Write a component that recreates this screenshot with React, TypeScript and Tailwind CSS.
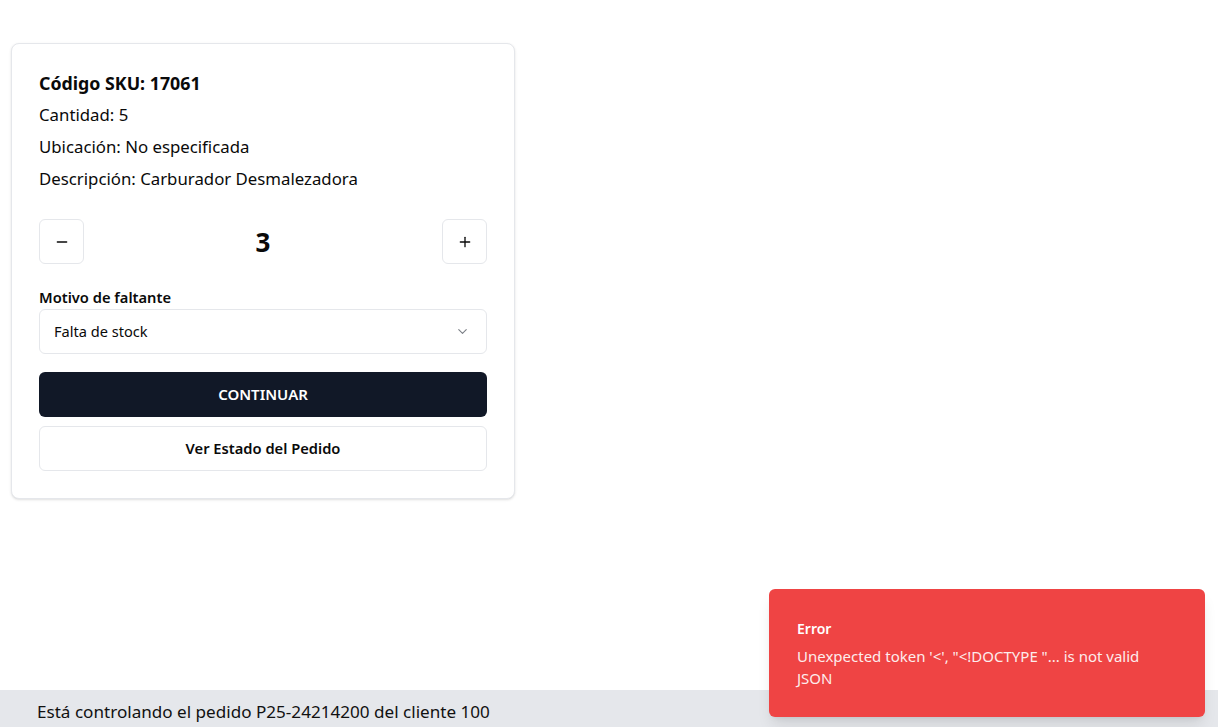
import React from "react";

export default function App() {
  return (
    <div
      className="relative h-[727px] w-full overflow-hidden bg-white flex flex-col text-[#0a0a0a]"
      style={{ fontFamily: '"Noto Sans", "Open Sans", sans-serif' }}
    >
      <div className="flex-1 pt-[43px] pl-[11px]">
        <div className="w-[504px] rounded-lg border border-[#e5e7eb] bg-white px-[27px] pt-[27px] pb-[27px] shadow-sm">
          <div className="flex flex-col gap-2 text-[16.8px] leading-6">
            <div className="text-[17.8px] font-bold">Código SKU: 17061</div>
            <div>Cantidad: 5</div>
            <div>Ubicación: No especificada</div>
            <div>Descripción: Carburador Desmalezadora</div>
          </div>
          <div className="mt-[28px] flex items-center justify-between">
            <button className="flex h-[45px] w-[45px] items-center justify-center rounded-md border border-[#e5e7eb] bg-white">
              <svg width="16" height="16" viewBox="0 0 24 24" fill="none" stroke="currentColor" strokeWidth="2" strokeLinecap="round">
                <path d="M5 12h14" />
              </svg>
            </button>
            <div className="text-[26px] font-bold leading-8">3</div>
            <button className="flex h-[45px] w-[45px] items-center justify-center rounded-md border border-[#e5e7eb] bg-white">
              <svg width="16" height="16" viewBox="0 0 24 24" fill="none" stroke="currentColor" strokeWidth="2" strokeLinecap="round">
                <path d="M5 12h14" />
                <path d="M12 5v14" />
              </svg>
            </button>
          </div>
          <div className="mt-[23px] text-[14.7px] font-semibold leading-5">Motivo de faltante</div>
          <div className="mt-[2px] flex h-[45px] items-center justify-between rounded-md border border-[#e5e7eb] bg-white pl-[14px] pr-[16px] text-[14.6px]">
            <span>Falta de stock</span>
            <svg width="15" height="15" viewBox="0 0 24 24" fill="none" stroke="#7b7f86" strokeWidth="1.8" strokeLinecap="round" strokeLinejoin="round">
              <path d="m6 9 6 6 6-6" />
            </svg>
          </div>
          <button className="mt-[18px] flex h-[45px] w-full items-center justify-center rounded-md bg-[#111827] text-[15px] font-semibold text-white">
            CONTINUAR
          </button>
          <button className="mt-[9px] flex h-[45px] w-full items-center justify-center rounded-md border border-[#e5e7eb] bg-white text-[14.7px] font-semibold">
            Ver Estado del Pedido
          </button>
        </div>
      </div>
      <div className="h-[37px] bg-[#e5e7eb] pl-[37px] pt-[10px] text-[17.1px] leading-6 text-[#111]">
        Está controlando el pedido P25-24214200 del cliente 100
      </div>
      <div className="absolute right-[13px] bottom-[10px] w-[436px] rounded-md bg-[#ef4444] px-[28px] pt-[32px] pb-[28px] text-white shadow-lg">
        <div className="text-sm font-semibold leading-4">Error</div>
        <div className="mt-[8px] text-[15px] leading-[22px] opacity-90">
          Unexpected token '&lt;', "&lt;!DOCTYPE "... is not valid JSON
        </div>
      </div>
    </div>
  );
}
